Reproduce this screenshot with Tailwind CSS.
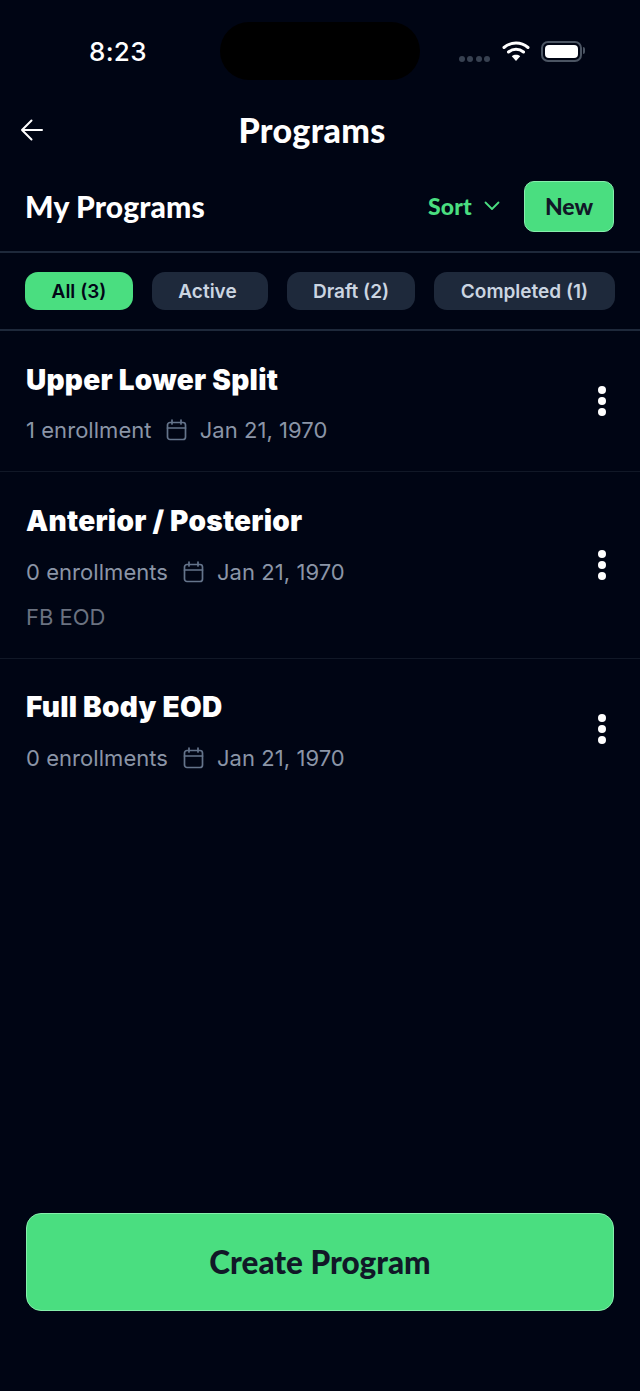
<!DOCTYPE html>
<html lang="en">
<head>
    <meta charset="UTF-8">
    <title>Programs</title>
    <meta name="viewport" content="width=device-width, initial-scale=1.0">
    <script src="https://cdn.jsdelivr.net/npm/@tailwindcss/browser@4"></script>
</head>
<body class="bg-[#000514] font-['Inter',sans-serif] text-white">
<div class="relative w-[640px] h-[1391px] flex flex-col overflow-hidden">

    <!-- Status bar -->
    <div class="relative h-[104px] shrink-0 flex items-start justify-between">
        <span class="ml-[89px] mt-[36px] text-[26px] leading-[32px] font-medium tracking-[0.3px]">8:23</span>
        <div class="absolute left-[220px] top-[22px] w-[200px] h-[58px] rounded-full bg-black"></div>
        <div class="mr-[58px] mt-[40px] flex items-center">
            <div class="flex gap-[2.5px] mt-[15px] mr-[12px]">
                <span class="w-[6px] h-[6px] rounded-full bg-[#374151]"></span>
                <span class="w-[6px] h-[6px] rounded-full bg-[#374151]"></span>
                <span class="w-[6px] h-[6px] rounded-full bg-[#374151]"></span>
                <span class="w-[6px] h-[6px] rounded-full bg-[#374151]"></span>
            </div>
            <svg width="28" height="22" viewBox="0 0 28 22" fill="none" class="mr-[11px]">
                <path d="M2 7.5C9 1.5 19 1.5 26 7.5" stroke="white" stroke-width="3" stroke-linecap="round"/>
                <path d="M6.5 12C11 8.3 17 8.3 21.5 12" stroke="white" stroke-width="3" stroke-linecap="round"/>
                <path d="M14 21L9.8 16.2C12.2 14.4 15.8 14.4 18.2 16.2Z" fill="white"/>
            </svg>
            <div class="relative w-[41px] h-[21px] rounded-[7px] border-2 border-[#4b5563] p-[2px]">
                <div class="w-full h-full rounded-[4px] bg-white"></div>
                <div class="absolute right-[-5px] top-[4px] w-[2px] h-[7px] rounded-r-full bg-[#4b5563]"></div>
            </div>
        </div>
    </div>

    <!-- Title -->
    <div class="relative h-[54px] shrink-0 flex items-center justify-center">
        <svg class="absolute left-[19px] top-[13px]" width="26" height="26" viewBox="0 0 26 26" fill="none" stroke="white" stroke-width="2" stroke-linecap="round" stroke-linejoin="round">
            <path d="M23 13H3M12.5 3.5L3 13l9.5 9.5"/>
        </svg>
        <h1 class="ml-[-16px] mt-[-2px] text-[34px] leading-[36px] font-black font-['Lato',sans-serif] tracking-[0.3px]">Programs</h1>
    </div>

    <!-- My Programs row -->
    <div class="h-[95px] shrink-0 flex items-center justify-between pl-[25px] pr-[26px] pt-[5px] border-b-2 border-[#1e293b]">
        <h2 class="text-[30px] leading-[34px] font-black font-['Lato',sans-serif] tracking-[0.15px] mt-[-2px]">My Programs</h2>
        <div class="flex items-center mt-[-2px]">
            <span class="text-[23px] leading-[28px] font-black font-['Lato',sans-serif] tracking-[0.2px] text-[#4ade80]">Sort</span>
            <svg class="ml-[12px] mr-[24px]" width="16" height="10" viewBox="0 0 16 10" fill="none" stroke="#4ade80" stroke-width="1.8" stroke-linecap="round" stroke-linejoin="round">
                <path d="M1.5 1.5L8 8l6.5-6.5"/>
            </svg>
            <button class="w-[90px] h-[51px] rounded-[10px] bg-[#4ade80] border border-[#86efac] text-[23px] font-black font-['Lato',sans-serif] text-[#111827]">New</button>
        </div>
    </div>

    <!-- Filters -->
    <div class="h-[78px] shrink-0 flex items-center gap-[19px] pl-[25px] border-b-2 border-[#1e293b]">
        <span class="w-[108px] h-[38px] pt-[2px] flex items-center justify-center rounded-[13px] bg-[#4ade80] text-[#020617] text-[19px] font-semibold">All (3)</span>
        <span class="w-[116px] h-[38px] pt-[2px] pr-[5px] flex items-center justify-center rounded-[13px] bg-[#1e293b] text-[#cbd5e1] text-[19px] font-semibold">Active</span>
        <span class="w-[128px] h-[38px] pt-[2px] flex items-center justify-center rounded-[13px] bg-[#1e293b] text-[#cbd5e1] text-[19px] font-semibold">Draft (2)</span>
        <span class="w-[181px] h-[38px] pt-[2px] flex items-center justify-center rounded-[13px] bg-[#1e293b] text-[#cbd5e1] text-[19px] font-semibold">Completed (1)</span>
    </div>

    <!-- Program list -->
    <ul>
        <li class="relative h-[141px] pl-[26px] pt-[30px] border-b border-[#111827]">
            <h3 class="text-[28px] leading-[38px] font-black tracking-[0.27px]">Upper Lower Split</h3>
            <div class="mt-[17px] flex items-center text-[22px] leading-[28px] tracking-[0.05px] text-[#8b95a7]">
                <span>1 enrollment</span>
                <svg class="ml-[14px] mr-[13px]" width="21" height="22" viewBox="0 0 21 22" fill="none" stroke="#64748b" stroke-width="1.7" stroke-linecap="round"><rect x="1.5" y="3.5" width="18" height="17" rx="2.5"/><path d="M1.5 9h18M6 1v4M15 1v4"/></svg>
                <span>Jan 21, 1970</span>
            </div>
            <div class="absolute left-[598px] top-[55px] flex flex-col gap-[3px]">
                <span class="w-[8px] h-[8px] rounded-full bg-white"></span>
                <span class="w-[8px] h-[8px] rounded-full bg-white"></span>
                <span class="w-[8px] h-[8px] rounded-full bg-white"></span>
            </div>
        </li>
        <li class="relative h-[187px] pl-[26px] pt-[30px] border-b border-[#111827]">
            <h3 class="text-[28px] leading-[38px] font-black tracking-[0.27px]">Anterior / Posterior</h3>
            <div class="mt-[18px] flex items-center text-[22px] leading-[28px] tracking-[0.05px] text-[#8b95a7]">
                <span>0 enrollments</span>
                <svg class="ml-[15px] mr-[13px]" width="21" height="22" viewBox="0 0 21 22" fill="none" stroke="#64748b" stroke-width="1.7" stroke-linecap="round"><rect x="1.5" y="3.5" width="18" height="17" rx="2.5"/><path d="M1.5 9h18M6 1v4M15 1v4"/></svg>
                <span>Jan 21, 1970</span>
            </div>
            <p class="mt-[17px] text-[22px] leading-[28px] text-[#6b7280]">FB EOD</p>
            <div class="absolute left-[598px] top-[78px] flex flex-col gap-[3px]">
                <span class="w-[8px] h-[8px] rounded-full bg-white"></span>
                <span class="w-[8px] h-[8px] rounded-full bg-white"></span>
                <span class="w-[8px] h-[8px] rounded-full bg-white"></span>
            </div>
        </li>
        <li class="relative h-[141px] pl-[26px] pt-[29px]">
            <h3 class="text-[28px] leading-[38px] font-black tracking-[0.27px]">Full Body EOD</h3>
            <div class="mt-[18px] flex items-center text-[22px] leading-[28px] tracking-[0.05px] text-[#8b95a7]">
                <span>0 enrollments</span>
                <svg class="ml-[15px] mr-[13px]" width="21" height="22" viewBox="0 0 21 22" fill="none" stroke="#64748b" stroke-width="1.7" stroke-linecap="round"><rect x="1.5" y="3.5" width="18" height="17" rx="2.5"/><path d="M1.5 9h18M6 1v4M15 1v4"/></svg>
                <span>Jan 21, 1970</span>
            </div>
            <div class="absolute left-[598px] top-[55px] flex flex-col gap-[3px]">
                <span class="w-[8px] h-[8px] rounded-full bg-white"></span>
                <span class="w-[8px] h-[8px] rounded-full bg-white"></span>
                <span class="w-[8px] h-[8px] rounded-full bg-white"></span>
            </div>
        </li>
    </ul>

    <!-- Create button -->
    <div class="mt-auto px-[26px] pb-[80px]">
        <button class="w-full h-[98px] pt-[2px] rounded-[15px] bg-[#4ade80] border border-[#86efac] text-[31.5px] font-black font-['Lato',sans-serif] text-[#111827]">Create Program</button>
    </div>
</div>
</body>
</html>
